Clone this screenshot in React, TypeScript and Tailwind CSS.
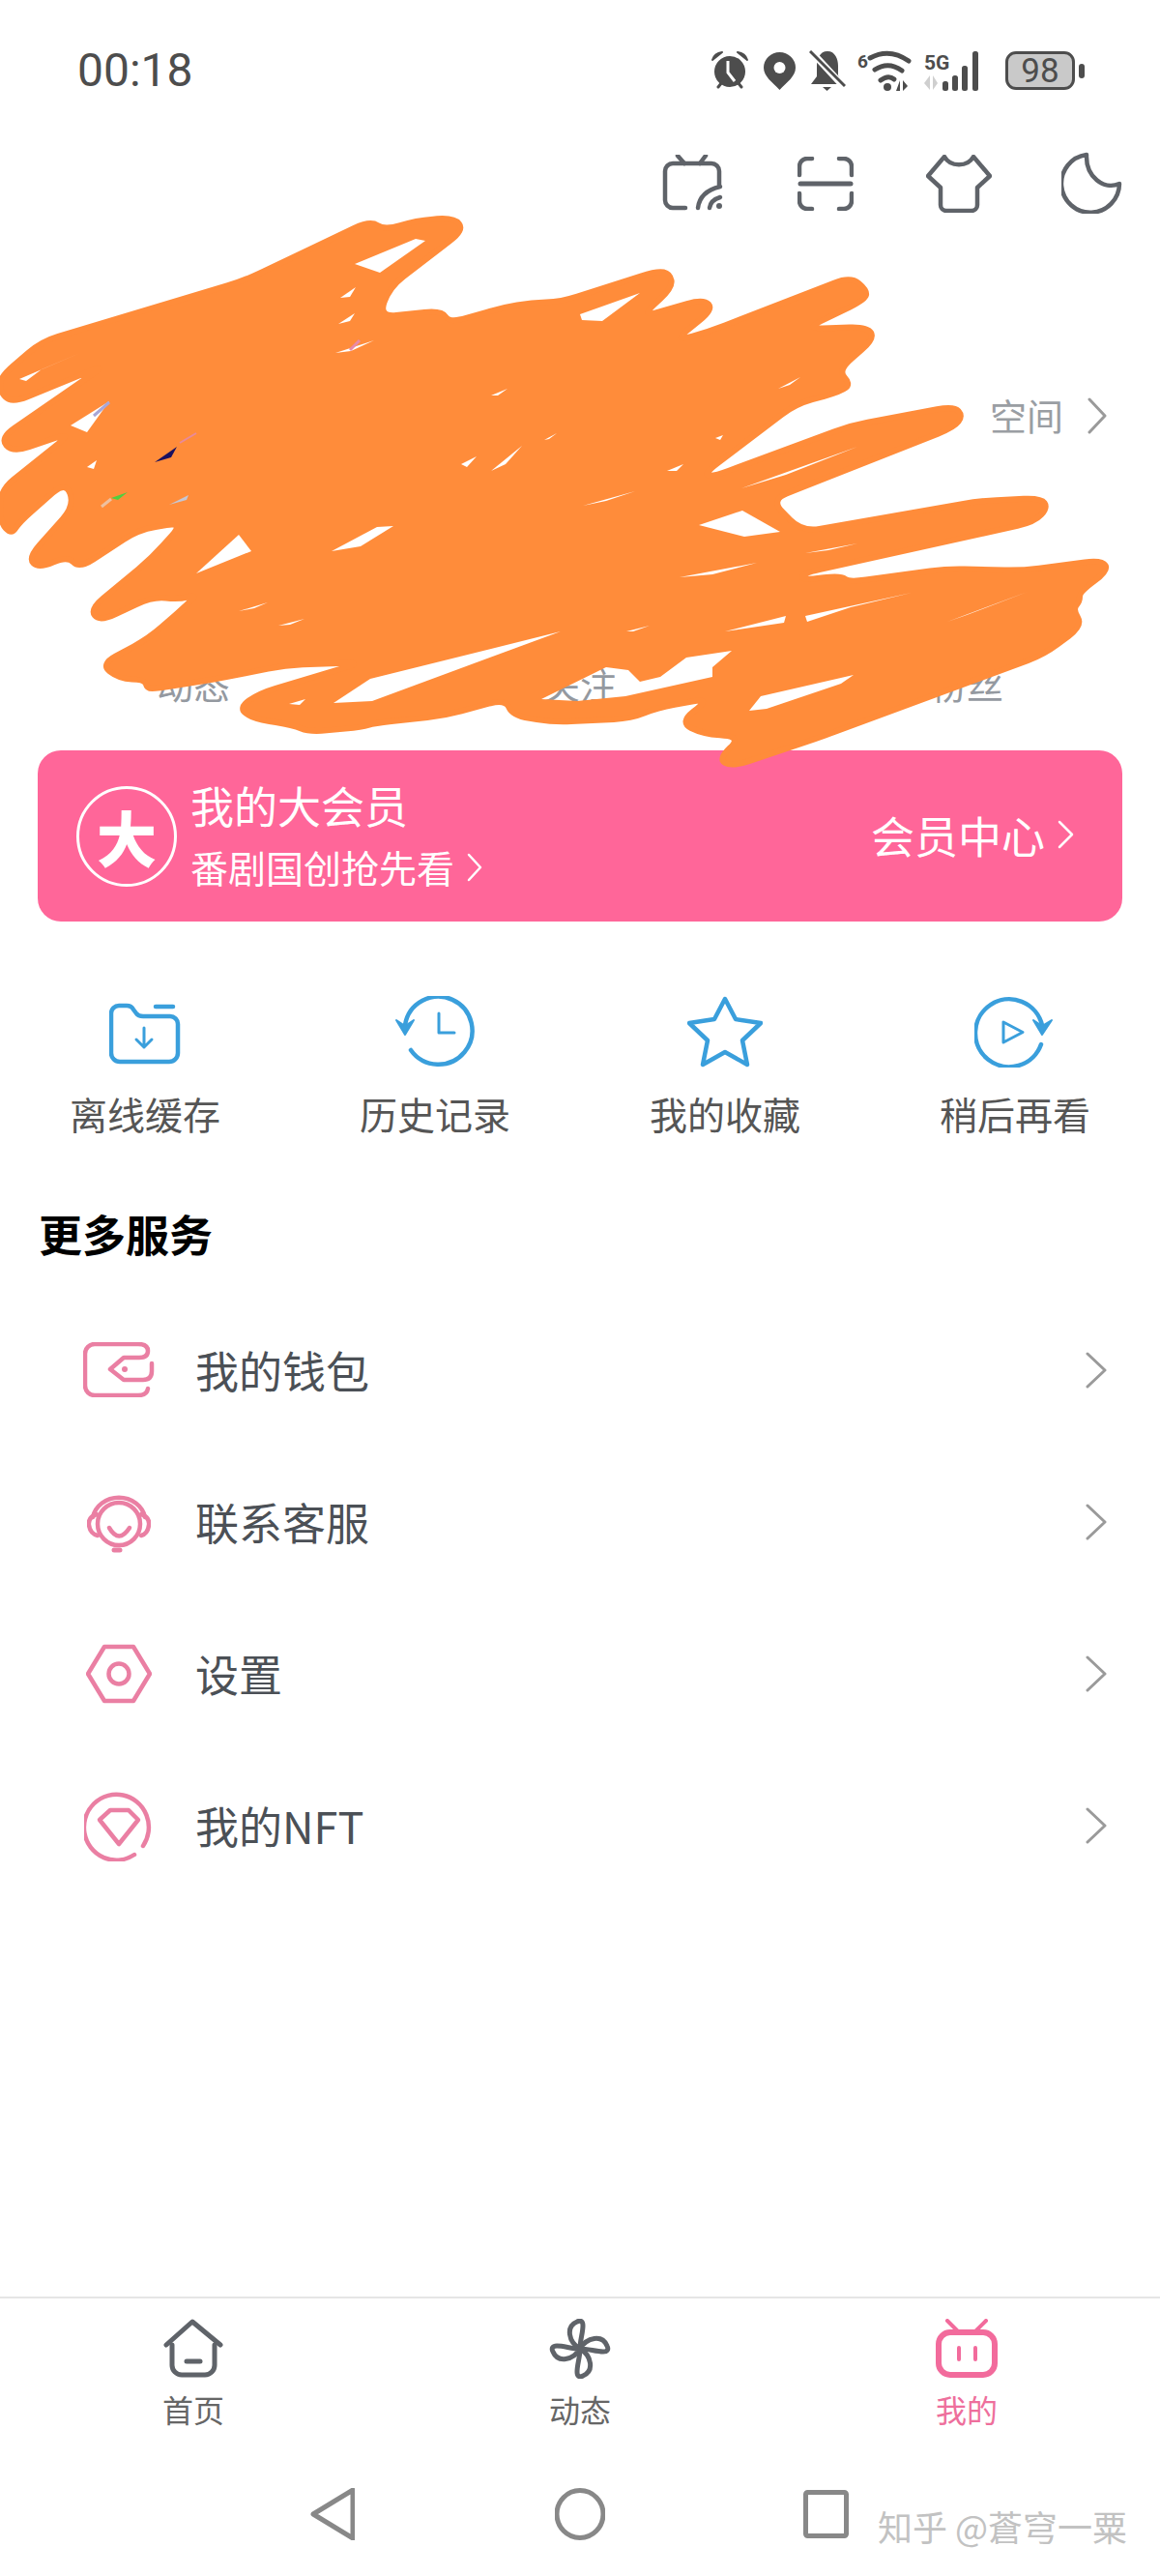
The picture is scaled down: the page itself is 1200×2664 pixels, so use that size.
import type { ReactNode } from "react";

const SCRIBBLE_POINTS =
  "0 390 43 353 253 290 383 228 398 238 430 228 470 225 480 238 403 297 392 328 457 321 465 334 520 318 550 313 580 312 680 280 693 283 696 297 663 328 728 309 738 320 697 353 733 343 880 286 897 300 895 310 833 340 897 338 905 350 867 383 880 397 870 405 823 418 728 490 737 493 880 440 987 420 996 430 987 442 797 517 830 550 1013 518 1077 515 1084 525 1070 540 830 593 830 600 870 595 878 602 980 588 1057 590 1140 579 1147 590 1117 612 1117 622 1110 630 1120 647 1080 677 847 763 757 793 743 785 767 762 727 759 703 747 735 722 680 732 653 743 573 747 530 740 523 723 460 740 387 748 375 752 320 757 303 750 261 743 247 732 268 717 375 685 295 688 236 700 163 712 152 712 150 703 123 702 104 687 154 660 196 623 203 615 185 620 158 617 103 643 93 630 157 577 190 540 143 548 82 588 70 575 40 588 29 577 77 523 68 498 20 540 12 553 0 540 0 507 75 447 13 468 0 453 110 377 12 417 0 405";

// rounds every corner of the traced outline, the marker stroke has no sharp ends
function roundedOutline(raw: string, radius: number) {
  const nums = raw.split(" ").map(Number);
  const pts: [number, number][] = [];
  for (let i = 0; i < nums.length; i += 2) pts.push([nums[i], nums[i + 1]]);
  const toward = (a: [number, number], b: [number, number]) => {
    const len = Math.hypot(b[0] - a[0], b[1] - a[1]);
    const r = Math.min(radius, len / 2);
    return [a[0] + ((b[0] - a[0]) * r) / len, a[1] + ((b[1] - a[1]) * r) / len];
  };
  let d = "";
  pts.forEach((p, i) => {
    const prev = pts[(i - 1 + pts.length) % pts.length];
    const next = pts[(i + 1) % pts.length];
    const from = toward(p, prev);
    const to = toward(p, next);
    d += `${i === 0 ? "M" : "L"}${from[0]} ${from[1]} Q${p[0]} ${p[1]} ${to[0]} ${to[1]} `;
  });
  return d + "Z";
}

const HOLES = [
  "M20 392 L83 365 43 382 27 394Z",
  "M367 273 L430 247 440 249 393 282Z",
  "M352 308 L368 297 362 307Z",
  "M350 335 L367 324 362 332Z",
  "M347 365 L387 352 363 363Z",
  "M73 440 L113 415 90 447Z",
  "M90 483 L100 476 97 485Z",
  "M203 593 L247 553 260 570Z",
  "M343 570 L390 545 407 544 373 565Z",
  "M247 632 L277 623 263 629Z",
  "M288 647 L315 640 300 646Z",
  "M477 480 L493 472 483 483Z",
  "M508 487 L540 461 523 480Z",
  "M563 455 L576 448 568 454Z",
  "M508 409 L525 402 515 409Z",
  "M600 325 L662 303 623 332 602 331Z",
  "M805 402 L828 390 817 398Z",
  "M740 453 L748 450 745 455Z",
  "M690 487 L707 480 700 487Z",
  "M603 523 L657 508 627 518Z",
  "M767 505 L887 462 813 491Z",
  "M723 543 L768 528 807 550 770 555Z",
  "M703 597 L783 582 737 594Z",
  "M833 572 L887 562 857 569Z",
  "M833 637 L943 613 880 628 835 643Z",
  "M750 653 L813 637 811 644Z",
  "M648 653 L672 647 655 653Z",
  "M580 653 L383 702 345 727 385 725Z",
  "M299 728 L316 723 310 729Z",
  "M560 723 L627 690 650 693 662 705 683 700 710 680 757 673 737 690 737 700 647 720 597 725Z",
  "M775 735 L787 720 883 698 870 707 793 733Z",
  "M980 643 L1063 612 1000 636Z",
];

function Scribble() {
  return (
    <svg className="absolute left-0 top-0 z-10 pointer-events-none" width="1200" height="820" viewBox="0 0 1200 820">
      <mask id="scribble-holes" maskUnits="userSpaceOnUse" x="0" y="0" width="1200" height="820">
        <rect width="1200" height="820" fill="#fff" />
        {HOLES.map((d) => (
          <path key={d} d={d} fill="#000" />
        ))}
      </mask>
      <path d={roundedOutline(SCRIBBLE_POINTS, 18)} fill="#ff8c3a" stroke="#ff8c3a" strokeWidth="6" strokeLinejoin="round" mask="url(#scribble-holes)" />
      <path d="M160 478 L183 462 177 473Z" fill="#1a1060" />
      <path d="M186 458 L203 448" stroke="#e88a9a" strokeWidth="2" />
      <path d="M115 515 L132 509 122 517Z" fill="#4fcf3f" />
      <path d="M105 524 L115 516" stroke="#eec0a0" strokeWidth="3" />
      <path d="M175 522 L195 512 193 517Z" fill="#c6c6d2" />
      <path d="M97 430 L113 416" stroke="#a9a6d6" strokeWidth="3" />
      <path d="M362 362 L372 352" stroke="#e88aa8" strokeWidth="3" />
    </svg>
  );
}

function StatusIcons() {
  return (
    <div className="flex items-center text-[#4d4d4d]">
      <svg width="38" height="40" viewBox="0 0 38 40">
        <path d="M7 37 L11 32 M31 37 L27 32" stroke="#4d4d4d" strokeWidth="3" strokeLinecap="round" />
        <path d="M1 9 Q3 2 11 1 Z M37 9 Q35 2 27 1 Z" fill="#4d4d4d" stroke="#4d4d4d" strokeWidth="2" strokeLinejoin="round" />
        <circle cx="19" cy="21" r="16" fill="#4d4d4d" />
        <path d="M17 10 V22 L24 31" fill="none" stroke="#fff" strokeWidth="3" />
      </svg>
      <svg className="ml-[16px]" width="33" height="39" viewBox="0 0 33 39">
        <path d="M16.5 39 C9 31 0 25 0 16 A16.5 16 0 0 1 33 16 C33 25 24 31 16.5 39Z" fill="#4d4d4d" />
        <circle cx="16.5" cy="16" r="6" fill="#fff" />
      </svg>
      <svg className="ml-[14px]" width="38" height="42" viewBox="0 0 38 42">
        <path d="M19 1 C27 1 30 9 30 16 V26 L36 35 H2 L8 27 V16 C8 9 11 1 19 1Z" fill="#4d4d4d" />
        <path d="M14 38 H23 L18.5 42Z" fill="#4d4d4d" />
        <path d="M1 0 L38 40" stroke="#fff" strokeWidth="7" />
        <path d="M1 1 L37 37" stroke="#4d4d4d" strokeWidth="3" />
      </svg>
      <svg className="ml-[12px]" width="56" height="43" viewBox="0 0 56 43">
        <text x="0" y="18" fontFamily="Roboto" fontWeight="700" fontSize="19" fill="#4d4d4d">6</text>
        <path d="M13 8 Q33 -3 53 11" fill="none" stroke="#4d4d4d" strokeWidth="5" strokeLinecap="round" />
        <path d="M18 20 Q32 11 46 21" fill="none" stroke="#4d4d4d" strokeWidth="5" strokeLinecap="round" />
        <path d="M24 31 Q32 25 38 30" fill="none" stroke="#4d4d4d" strokeWidth="5" strokeLinecap="round" />
        <circle cx="31" cy="38" r="4" fill="#4d4d4d" />
        <path d="M44 31 V42 H40 Z M47 31 V42 L52 37Z" fill="#4d4d4d" />
      </svg>
      <svg className="ml-[13px]" width="68" height="42" viewBox="0 0 68 42">
        <text x="0" y="20" fontFamily="Roboto" fontWeight="700" fontSize="21" fill="#4d4d4d">5G</text>
        <path d="M6 26 V41 L0 34Z M9 26 V41 L14 34Z" fill="#cfcfcf" />
        <rect x="19" y="32" width="6" height="10" rx="2.5" fill="#4d4d4d" />
        <rect x="29" y="26" width="6" height="16" rx="2.5" fill="#4d4d4d" />
        <rect x="39" y="16" width="6" height="26" rx="2.5" fill="#4d4d4d" />
        <rect x="50" y="1" width="6" height="41" rx="2.5" fill="#4d4d4d" />
      </svg>
      <div className="ml-[16px] w-[72px] h-[40px] rounded-[11px] border-[3px] border-[#4d4d4d] bg-[#c9c9c9] flex items-center justify-center text-[35px] leading-none font-['Roboto',sans-serif]">
        98
      </div>
      <div className="ml-[4px] w-[6px] h-[15px] rounded-[3px] bg-[#4d4d4d]" />
    </div>
  );
}

function TopIcons() {
  return (
    <div className="mt-[67px] h-[64px] pr-[39px] flex justify-end items-start">
      <svg width="64" height="58" viewBox="0 0 64 58" fill="none" stroke="#5f6369" strokeWidth="4.5" strokeLinecap="round">
        <path d="M16 1 L23 9 M45 1 L39 9" />
        <path d="M24 55 H11 A8 8 0 0 1 3 47 V17 A8 8 0 0 1 11 9 H51 A8 8 0 0 1 59 17 V31" />
        <path d="M37 55 Q39 38 60 33 M49 55 Q50 47 60 44" strokeWidth="4.5" />
        <circle cx="59" cy="53" r="3" fill="#5f6369" stroke="none" />
      </svg>
      <svg className="ml-[76px] mt-[2px]" width="58" height="56" viewBox="0 0 58 56" fill="none" stroke="#5f6369" strokeWidth="4.5" strokeLinecap="round">
        <path d="M2 19 V10 A8 8 0 0 1 10 2 H15 M56 19 V10 A8 8 0 0 0 48 2 H43" />
        <path d="M2 38 V46 A8 8 0 0 0 10 54 H15 M56 38 V46 A8 8 0 0 1 48 54 H43" />
        <path d="M3 28 H55" strokeWidth="5" />
      </svg>
      <svg className="ml-[75px]" width="68" height="60" viewBox="0 0 68 60" fill="none" stroke="#5f6369" strokeWidth="4.5" strokeLinejoin="round">
        <path d="M19 2 C25 13 43 13 49 2 L66 22 L53 34 V52 A6 6 0 0 1 47 58 H21 A6 6 0 0 1 15 52 V34 L2 22 Z" />
      </svg>
      <svg className="ml-[72px] -mt-[3px]" width="63" height="64" viewBox="0 0 63 64" fill="none" stroke="#5f6369" strokeWidth="4.5" strokeLinejoin="round">
        <path d="M26 3 A30 30 0 1 0 60 33 C44 40 25 26 26 3 Z" />
      </svg>
    </div>
  );
}

function Chevron({ w = 20, h = 38, color = "#9a9a9a", stroke = 3 }: { w?: number; h?: number; color?: string; stroke?: number }) {
  return (
    <svg width={w} height={h} viewBox={`0 0 ${w} ${h}`} fill="none" stroke={color} strokeWidth={stroke} strokeLinecap="round" strokeLinejoin="round">
      <path d={`M2 2 L${w - 2} ${h / 2} L2 ${h - 2}`} />
    </svg>
  );
}

function ProfileArea() {
  return (
    <>
      <div className="mt-[186px] h-[40px] pr-[55px] flex items-center justify-end text-[38px] leading-none text-[#9a9ea3]">
        <span className="-mt-[3px]">空间</span>
        <span className="ml-[25px]">
          <Chevron w={20} h={38} />
        </span>
      </div>
      <div className="mt-[238px] h-[38px] grid grid-cols-3 text-center text-[38px] leading-none text-[#9499a0]">
        <span>动态</span>
        <span>关注</span>
        <span>粉丝</span>
      </div>
    </>
  );
}

function VipCard() {
  return (
    <div className="mt-[50px] mx-[39px] h-[177px] rounded-[24px] bg-[#ff6699] pl-[40px] pr-[50px] flex items-center justify-between text-white">
      <div className="flex items-center">
        <div className="w-[104px] h-[104px] rounded-full border-[3px] border-white flex items-center justify-center text-[62px] font-black leading-none">
          大
        </div>
        <div className="ml-[14px] -mt-[3px]">
          <div className="text-[45px] leading-none">我的大会员</div>
          <div className="mt-[22px] flex items-center text-[39px] leading-none">
            <span>番剧国创抢先看</span>
            <span className="ml-[13px]">
              <Chevron w={16} h={30} color="#fff" stroke={2.5} />
            </span>
          </div>
        </div>
      </div>
      <div className="-mt-[3px] flex items-center text-[45px] leading-none">
        <span>会员中心</span>
        <span className="ml-[13px]">
          <Chevron w={17} h={30} color="#fff" stroke={2.5} />
        </span>
      </div>
    </div>
  );
}

const BLUE = "#3a9fdc";

const quickLinks: { label: string; icon: ReactNode }[] = [
  {
    label: "离线缓存",
    icon: (
      <svg width="74" height="64" viewBox="0 0 74 64" fill="none" stroke={BLUE} strokeWidth="4.5" strokeLinecap="round" strokeLinejoin="round" className="mt-[7px]">
        <path d="M2 11 A8 8 0 0 1 10 3 H18 Q23 3 25 7 L28 11 Q30 14 35 14 H63 A8 8 0 0 1 71 22 V52 A9 9 0 0 1 62 61 H11 A9 9 0 0 1 2 52 Z" />
        <path d="M48 4 H66" />
        <path d="M36 26 V46 M28 38 L36 46 L44 38" strokeWidth="3" />
      </svg>
    ),
  },
  {
    label: "历史记录",
    icon: (
      <svg width="84" height="74" viewBox="0 0 84 74" fill="none" stroke={BLUE} strokeWidth="4.5" strokeLinecap="round" strokeLinejoin="round">
        <path d="M11 30 A35 35 0 1 1 17 56" />
        <path d="M2 25 L11 40 L20 25 L11 31 Z" fill={BLUE} strokeWidth="2" />
        <path d="M46 18 V38 H62" strokeWidth="3" />
      </svg>
    ),
  },
  {
    label: "我的收藏",
    icon: (
      <svg width="78" height="74" viewBox="0 0 78 74" fill="none" stroke={BLUE} strokeWidth="4.5" strokeLinejoin="round">
        <path d="M39 3 L50 24 L76 28 L57 46 L62 71 L39 58 L16 71 L21 46 L2 28 L28 24 Z" />
      </svg>
    ),
  },
  {
    label: "稍后再看",
    icon: (
      <svg width="84" height="74" viewBox="0 0 84 74" fill="none" stroke={BLUE} strokeWidth="4.5" strokeLinecap="round" strokeLinejoin="round">
        <path d="M70 30 A35 35 0 1 0 69 50" />
        <path d="M61 25 L70 40 L80 25 L70 31 Z" fill={BLUE} strokeWidth="2" />
        <path d="M30 27 V48 L50 37.5 Z" strokeWidth="3" />
      </svg>
    ),
  },
];

function QuickLinks() {
  return (
    <div className="mt-[77px] grid grid-cols-4">
      {quickLinks.map((link) => (
        <div key={link.label} className="flex flex-col items-center">
          <div className="h-[74px]">{link.icon}</div>
          <div className="mt-[28px] text-[39px] leading-none text-[#555]">{link.label}</div>
        </div>
      ))}
    </div>
  );
}

const PINK = "#ea7fa3";

const services: { label: string; icon: ReactNode }[] = [
  {
    label: "我的钱包",
    icon: (
      <svg width="74" height="57" viewBox="0 0 74 57" fill="none" stroke={PINK} strokeWidth="4.5" strokeLinecap="round" strokeLinejoin="round">
        <path d="M67 48 Q66 55 57 55 H12 A10 10 0 0 1 2 45 V12 A10 10 0 0 1 12 2 H57 Q67 2 67 9 Q67 16 58 16 H42 L28 28 L42 39 H62 Q71 39 71 30 V22" />
        <circle cx="43" cy="28" r="3" fill={PINK} stroke="none" />
      </svg>
    ),
  },
  {
    label: "联系客服",
    icon: (
      <svg width="66" height="64" viewBox="0 0 66 64" fill="none" stroke={PINK} strokeWidth="4.5" strokeLinecap="round">
        <path d="M6 27 A27.5 25 0 0 1 60 27" />
        <circle cx="33" cy="34" r="22" />
        <path d="M10 24 Q1 27 2 35 Q3 44 11 46 M56 24 Q65 27 64 35 Q63 44 56 46" />
        <path d="M23 38 Q33 55 44 38" />
        <path d="M28 61 H34" strokeWidth="5" />
      </svg>
    ),
  },
  {
    label: "设置",
    icon: (
      <svg width="68" height="62" viewBox="0 0 68 62" fill="none" stroke={PINK} strokeWidth="4.5" strokeLinejoin="round">
        <path d="M2 31 L19 3 H49 L66 31 L49 59 H19 Z" />
        <circle cx="34" cy="31" r="10.5" />
      </svg>
    ),
  },
  {
    label: "我的NFT",
    icon: (
      <svg width="72" height="74" viewBox="0 0 72 74" fill="none" stroke={PINK} strokeWidth="4.5" strokeLinecap="round" strokeLinejoin="round">
        <path d="M52 67 A33.5 34 0 1 1 61 58" />
        <path d="M16 31 L27 21 H46 L56 31 L36 56 Z" />
      </svg>
    ),
  },
];

function Services() {
  return (
    <>
      <h2 className="mt-[82px] pl-[40px] text-[45px] h-[45px] leading-none font-bold text-black">更多服务</h2>
      <div className="mt-[40px]">
        {services.map((item) => (
          <div key={item.label} className="h-[157px] flex items-center pr-[55px]">
            <div className="w-[202px] pl-[86px] pr-[42px] flex justify-center">{item.icon}</div>
            <div className="flex-1 text-[45px] leading-none text-[#4b5056]">{item.label}</div>
            <Chevron w={22} h={38} />
          </div>
        ))}
      </div>
    </>
  );
}

const GRAY = "#5f6369";
const FAN_BLADE = "M32 31 C20 24 17 8 29 3 C33 1 35 3 35 7 C35 15 32 22 32 31 Z";

function TabBar() {
  return (
    <div className="border-t-2 border-[#e5e5e5] pt-[21px] grid grid-cols-3 text-center text-[32px] leading-none">
      <div className="flex flex-col items-center text-[#666]">
        <svg width="62" height="62" viewBox="0 0 62 62" fill="none" stroke={GRAY} strokeWidth="5" strokeLinecap="round" strokeLinejoin="round">
          <path d="M3 27 L30 3 L59 27" />
          <path d="M9 27 V48 A10 10 0 0 0 19 58 H43 A10 10 0 0 0 53 48 V27" />
          <path d="M24 44 H38" />
        </svg>
        <span className="mt-[15px]">首页</span>
      </div>
      <div className="flex flex-col items-center text-[#666]">
        <svg width="64" height="62" viewBox="0 0 64 62" fill="none" stroke={GRAY} strokeWidth="5" strokeLinejoin="round">
          <path d={FAN_BLADE} />
          <path transform="rotate(90 32 31)" d={FAN_BLADE} />
          <path transform="rotate(180 32 31)" d={FAN_BLADE} />
          <path transform="rotate(270 32 31)" d={FAN_BLADE} />
        </svg>
        <span className="mt-[15px]">动态</span>
      </div>
      <div className="flex flex-col items-center text-[#ee6f9c]">
        <svg width="64" height="62" viewBox="0 0 64 62" fill="none" stroke="#f26b9c" strokeWidth="6" strokeLinecap="round">
          <path d="M12 2 L22 12 M52 2 L42 12" strokeWidth="4" />
          <rect x="3" y="14" width="58" height="44" rx="12" />
          <path d="M24 30 V42 M41 30 V42" strokeWidth="4" />
        </svg>
        <span className="mt-[15px]">我的</span>
      </div>
    </div>
  );
}

function NavBar() {
  return (
    <div className="relative mt-[65px] h-[56px] mb-[36px] pl-[321px] flex items-center">
      <svg width="46" height="54" viewBox="0 0 46 54" fill="none" stroke="#888" strokeWidth="5" strokeLinejoin="round">
        <path d="M44 2 V52 L3 27 Z" />
      </svg>
      <svg className="ml-[207px]" width="52" height="54" viewBox="0 0 52 54" fill="none" stroke="#888" strokeWidth="5">
        <ellipse cx="26" cy="27" rx="24" ry="24.5" />
      </svg>
      <svg className="ml-[205px]" width="47" height="50" viewBox="0 0 47 50" fill="none" stroke="#888" strokeWidth="5" strokeLinejoin="round">
        <rect x="2.5" y="2.5" width="42" height="45" rx="2" />
      </svg>
      <span className="absolute left-[908px] top-[22px] text-[36px] leading-none whitespace-nowrap text-[#c2c2c2] [text-shadow:1px_1px_0_#ffffff]">
        知乎 @蒼穹一粟
      </span>
    </div>
  );
}

export default function App() {
  return (
    <div className="relative w-[1200px] h-[2664px] overflow-hidden bg-white flex flex-col font-['Noto_Sans_CJK_SC','Noto_Sans',sans-serif]">
      <div className="pt-[53px] h-[93px] pl-[80px] pr-[78px] flex items-center justify-between">
        <span className="font-['Roboto',sans-serif] text-[48px] leading-none text-[#4d4d4d]">00:18</span>
        <StatusIcons />
      </div>
      <TopIcons />
      <ProfileArea />
      <VipCard />
      <QuickLinks />
      <Services />
      <div className="flex-1" />
      <TabBar />
      <NavBar />
      <Scribble />
    </div>
  );
}
